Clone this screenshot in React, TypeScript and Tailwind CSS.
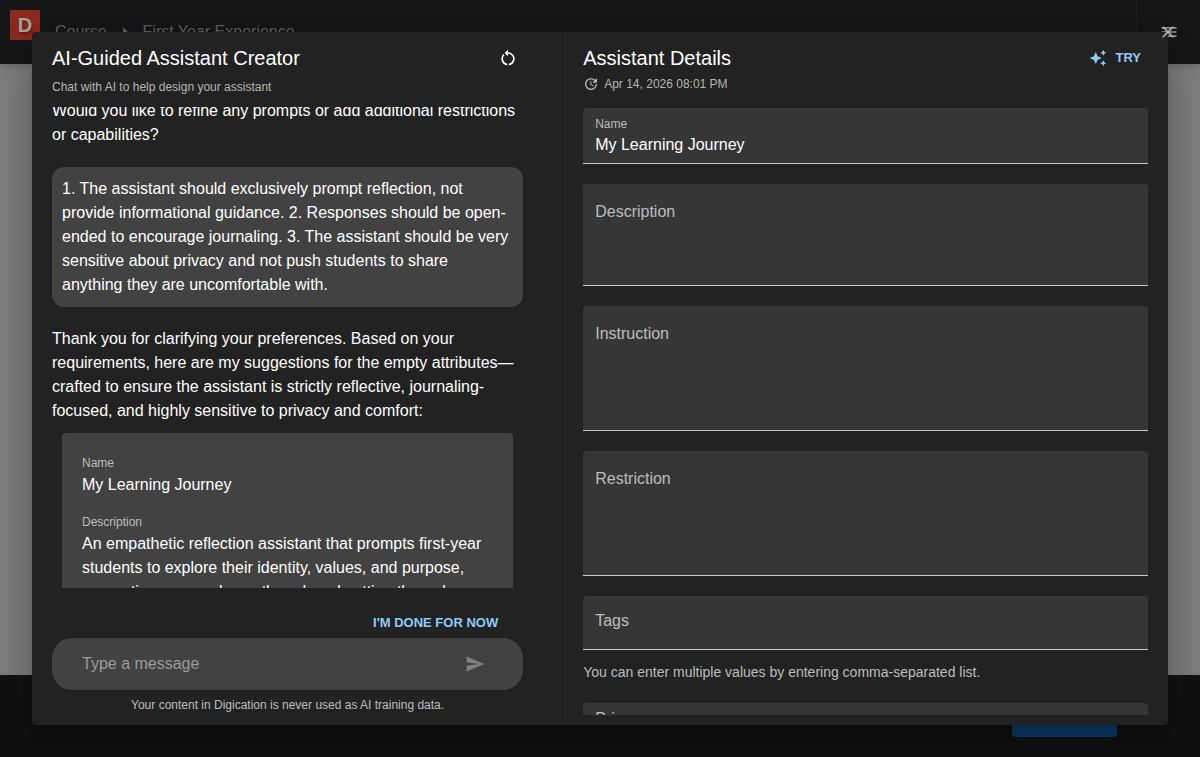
import React from "react";
import {
  MdArrowRight,
  MdAutoAwesome,
  MdClose,
  MdMenu,
  MdRestartAlt,
  MdSend,
  MdUpdate,
} from "react-icons/md";

function PageBehind() {
  return (
    <div className="flex h-screen flex-col bg-[#7e7f81]" aria-hidden="true">
      <header className="flex h-16 shrink-0 bg-[#141618] shadow-md">
        <div className="flex flex-1 items-start">
          <div className="mt-[10px] ml-[10px] flex h-[30px] w-[30px] items-center justify-center bg-[#8c2a1f] text-xl font-bold text-[#a8a2a1] [text-shadow:1px_2px_2px_rgba(0,0,0,0.3)]">
            D
          </div>
          <nav className="ml-[15px] flex h-16 items-center text-base text-[#5c5e61]">
            <span>Course</span>
            <MdArrowRight className="mx-[6px] h-6 w-6" />
            <span>First Year Experience</span>
          </nav>
        </div>
        <div className="flex w-16 items-center justify-center border-l border-[#1d1f21]">
          <MdMenu className="h-5 w-5 text-[#97989b]" />
        </div>
      </header>
      <main className="flex-1" />
      <footer className="flex h-[82px] shrink-0 items-start justify-end bg-[#121212] pt-[26px] pr-[83px]">
        <div className="h-9 w-[105px] rounded bg-[#0d3d70]" />
      </footer>
    </div>
  );
}

function ChatPanel() {
  return (
    <section className="flex w-[45%] flex-col px-5">
      <div className="flex h-[52px] shrink-0 items-center justify-between">
        <h2 className="text-xl">AI-Guided Assistant Creator</h2>
        <button type="button" aria-label="Restart" className="mr-[5px]">
          <MdRestartAlt className="h-5 w-5" />
        </button>
      </div>
      <p className="-mt-1 h-[27px] shrink-0 text-xs leading-[14px] text-[#b5b5b5]">
        Chat with AI to help design your assistant
      </p>

      <div className="flex min-h-0 flex-1 flex-col overflow-hidden whitespace-nowrap">
        <p className="-mt-2 shrink-0">
          Would you like to refine any prompts or add additional restrictions
          <br />
          or capabilities?
        </p>
        <p className="mt-5 shrink-0 rounded-xl bg-[#424242] p-[10px]">
          1. The assistant should exclusively prompt reflection, not
          <br />
          provide informational guidance. 2. Responses should be open-
          <br />
          ended to encourage journaling. 3. The assistant should be very
          <br />
          sensitive about privacy and not push students to share
          <br />
          anything they are uncomfortable with.
        </p>
        <p className="mt-5 shrink-0">
          Thank you for clarifying your preferences. Based on your
          <br />
          requirements, here are my suggestions for the empty attributes—
          <br />
          crafted to ensure the assistant is strictly reflective, journaling-
          <br />
          focused, and highly sensitive to privacy and comfort:
        </p>
        <div className="mx-[10px] mt-[10px] shrink-0 rounded-sm bg-[#424242] p-5">
          <h3 className="text-xs leading-5 text-[#bdbdbd]">Name</h3>
          <p>My Learning Journey</p>
          <h3 className="mt-[15px] text-xs leading-5 text-[#bdbdbd]">
            Description
          </h3>
          <p>
            An empathetic reflection assistant that prompts first-year
            <br />
            students to explore their identity, values, and purpose,
            <br />
            supporting personal growth and goal setting through
          </p>
        </div>
      </div>

      <form className="shrink-0 pt-5">
        <div className="flex h-[30px] items-center justify-end pr-[25px]">
          <button
            type="button"
            className="text-[13px] font-bold text-[#90caf9]"
          >
            I'M DONE FOR NOW
          </button>
        </div>
        <div className="flex h-[52px] items-center rounded-[20px] bg-[#424242] pr-[38px] pl-[30px] shadow">
          <input
            type="text"
            aria-label="Type a message"
            placeholder="Type a message"
            className="min-w-0 flex-1 bg-transparent outline-none placeholder:text-[#9b9b9b]"
          />
          <button type="submit" aria-label="Send">
            <MdSend className="h-5 w-5 text-[#828282]" />
          </button>
        </div>
        <p className="h-[35px] pt-[7px] text-center text-xs text-[#bdbdbd]">
          Your content in Digication is never used as AI training data.
        </p>
      </form>
    </section>
  );
}

type AreaProps = {
  id: string;
  label: string;
  className: string;
};

function Area({ id, label, className }: AreaProps) {
  return (
    <div
      className={`mb-5 flex shrink-0 flex-col rounded-t border-b border-[#c8c8c8] bg-[#363636] px-3 ${className}`}
    >
      <label htmlFor={id} className="text-[#bdbdbd]">
        {label}
      </label>
      <textarea
        id={id}
        className="min-h-0 w-full flex-1 resize-none bg-transparent outline-none"
      />
    </div>
  );
}

function DetailsPanel() {
  return (
    <section className="flex min-w-0 flex-1 flex-col px-5 pb-[10px]">
      <div className="flex h-[52px] shrink-0 items-center justify-between">
        <h2 className="text-xl">Assistant Details</h2>
        <button
          type="button"
          className="mr-[7px] flex items-center gap-2 text-[13px] font-bold text-[#90caf9]"
        >
          <MdAutoAwesome className="h-[18px] w-[18px]" />
          TRY
        </button>
      </div>
      <p className="-mt-2 flex h-8 shrink-0 items-start gap-[5px] text-xs leading-4 text-[#b5b5b5]">
        <MdUpdate className="h-4 w-4" />
        Apr 14, 2026 08:01 PM
      </p>

      <form className="flex min-h-0 flex-1 flex-col overflow-hidden">
        <div className="mb-5 flex h-14 shrink-0 flex-col rounded-t border-b border-[#c8c8c8] bg-[#363636] px-3 pt-2">
          <label htmlFor="name" className="text-xs text-[#bdbdbd]">
            Name
          </label>
          <input
            id="name"
            type="text"
            defaultValue="My Learning Journey"
            className="h-[26px] bg-transparent outline-none"
          />
        </div>
        <Area id="description" label="Description" className="h-[102px] pt-4" />
        <Area id="instruction" label="Instruction" className="h-[125px] pt-4" />
        <Area id="restriction" label="Restriction" className="h-[125px] pt-4" />
        <div className="flex h-[54px] shrink-0 items-center rounded-t border-b border-[#c8c8c8] bg-[#363636] px-3 pb-1">
          <label htmlFor="tags" className="mr-2 text-[#bdbdbd]">
            Tags
          </label>
          <input
            id="tags"
            type="text"
            className="min-w-0 flex-1 bg-transparent outline-none"
          />
        </div>
        <p className="mt-3 mb-[21px] shrink-0 text-sm leading-5 text-[#bdbdbd]">
          You can enter multiple values by entering comma-separated list.
        </p>
        <Area id="privacy" label="Privacy" className="h-14 pt-1" />
      </form>
    </section>
  );
}

export default function App() {
  return (
    <div className="relative h-screen overflow-hidden font-['Liberation_Sans',Arial,sans-serif] text-base text-white">
      <PageBehind />
      <div className="absolute inset-0 p-8">
        <div
          role="dialog"
          aria-label="AI-Guided Assistant Creator"
          className="relative flex h-full rounded-sm bg-[#222222] shadow-[0_11px_15px_-7px_rgba(0,0,0,0.2),0_24px_38px_3px_rgba(0,0,0,0.14),0_9px_46px_8px_rgba(0,0,0,0.12)]"
        >
          <ChatPanel />
          <div className="w-5 shrink-0 border-x border-[#1f1f1f]" />
          <DetailsPanel />
          <button
            type="button"
            aria-label="Close"
            className="absolute -top-[10px] -right-[10px] text-[#b0b0b0]"
          >
            <MdClose className="h-5 w-5" />
          </button>
        </div>
      </div>
    </div>
  );
}
